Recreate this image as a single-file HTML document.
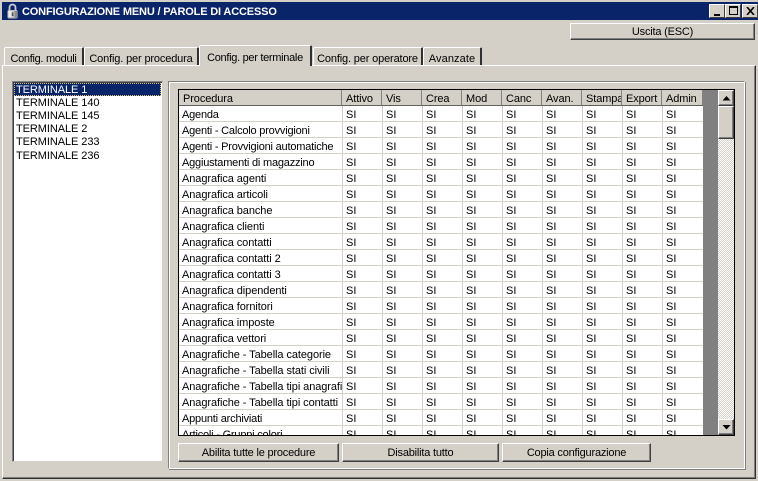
<!DOCTYPE html>
<html><head><meta charset="utf-8"><style>
html,body{margin:0;padding:0}
body{width:758px;height:481px;overflow:hidden;background:#d4d0c8;position:relative;font:11px "Liberation Sans",sans-serif;color:#000}
div{position:absolute;box-sizing:border-box;white-space:nowrap}
.btn{background:#d4d0c8;border:1px solid;border-color:#fff #404040 #404040 #fff;box-shadow:inset -1px -1px 0 #808080;text-align:center;line-height:19px;letter-spacing:-.2px}
.tab{background:#d4d0c8;border-top:1px solid #fff;border-left:1px solid #fff;border-right:2px solid #303030;text-align:center;border-top-left-radius:2px;border-top-right-radius:2px;letter-spacing:-.3px}
.r{left:0;width:524px;height:16px;border-bottom:1px solid #d4d0c8;background:#fff;line-height:19px;letter-spacing:-.2px}
.r b{position:absolute;top:0;width:40px;height:15px;border-left:1px solid #d4d0c8;font-weight:normal;padding-left:3px;letter-spacing:0}
.r b:nth-of-type(1){left:163px}.r b:nth-of-type(2){left:203px}.r b:nth-of-type(3){left:243px}.r b:nth-of-type(4){left:283px}.r b:nth-of-type(5){left:323px}.r b:nth-of-type(6){left:363px}.r b:nth-of-type(7){left:403px}.r b:nth-of-type(8){left:443px}.r b:nth-of-type(9){left:483px}
.r span{padding-left:3px}
.r span.a{letter-spacing:-.08px}
.h{top:0;height:16px;background:#d4d0c8;border-right:1px solid #808080;border-bottom:1px solid #606060;line-height:19px;padding-left:4px;overflow:hidden;letter-spacing:-.1px}
.l{left:3px;width:145px;height:13px;line-height:15px;font-size:11px;letter-spacing:-.07px}
.wb{width:16px;height:14px;top:4px;background:#d4d0c8;border:1px solid;border-color:#fff #404040 #404040 #fff}
.sb{left:718px;width:16px;background:#d4d0c8;border:1px solid;border-color:#fff #404040 #404040 #fff}
</style></head><body>

<!-- title bar -->
<div style="left:2px;top:2px;width:756px;height:18px;background:#0a246a"></div>
<svg style="position:absolute;left:7px;top:3px" width="11" height="16" viewBox="0 0 11 16"><path d="M2.5 8V4.5a3 3 0 0 1 6 0V8" fill="none" stroke="#d0d0d0" stroke-width="1.8"/><rect x="0.5" y="7" width="10" height="8.5" rx="1.5" fill="#c0c0c0"/><rect x="1.5" y="8" width="3" height="6" fill="#ececec"/><rect x="7.5" y="8" width="2.5" height="7" fill="#8c8c8c"/><rect x="4.8" y="9.5" width="1.6" height="3.5" fill="#505050"/></svg>
<div style="left:22px;top:5px;height:14px;line-height:14px;color:#fff;font-weight:bold;font-size:11px;letter-spacing:-.16px">CONFIGURAZIONE MENU / PAROLE DI ACCESSO</div>
<div class="wb" style="left:709px"><div style="left:4px;top:9px;width:6px;height:2px;background:#000"></div></div>
<div class="wb" style="left:725px"><div style="left:3px;top:1px;width:9px;height:9px;border:1px solid #000;border-top-width:2px"></div></div>
<div class="wb" style="left:742px"><svg style="position:absolute;left:3px;top:2px" width="9" height="8"><path d="M1 0L8 8M8 0L1 8" stroke="#000" stroke-width="1.6"/></svg></div>

<div class="btn" style="left:570px;top:23px;width:185px;height:17px;line-height:16px">Uscita (ESC)</div>

<!-- tab panel -->
<div style="left:2px;top:65px;width:754px;height:414px;background:#d4d0c8;border:1px solid;border-color:#fff #303030 #303030 #fff;box-shadow:inset -1px -1px 0 #808080"></div>
<div class="tab" style="left:4px;top:47px;width:80px;height:18px;line-height:23px">Config. moduli</div>
<div class="tab" style="left:84px;top:47px;width:115px;height:18px;line-height:23px;letter-spacing:-.15px">Config. per procedura</div>
<div class="tab" style="left:199px;top:45px;width:113px;height:21px;line-height:25px;z-index:2">Config. per terminale</div>
<div class="tab" style="left:313px;top:47px;width:110px;height:18px;line-height:23px;letter-spacing:-.15px">Config. per operatore</div>
<div class="tab" style="left:423px;top:47px;width:59px;height:18px;line-height:23px;letter-spacing:.1px">Avanzate</div>

<!-- list -->
<div style="left:12px;top:81px;width:151px;height:381px;background:#fff;border:1px solid;border-color:#808080 #d4d0c8 #d4d0c8 #808080;box-shadow:inset 1px 1px 0 #404040"></div>
<div style="left:14px;top:83px;width:147px;height:13px;background:#0a246a;outline:1px dotted #d8c070;outline-offset:-1px"></div>
<div class="l" style="left:16px;top:83px;color:#fff">TERMINALE 1</div>
<div class="l" style="left:16px;top:96px">TERMINALE 140</div>
<div class="l" style="left:16px;top:109px">TERMINALE 145</div>
<div class="l" style="left:16px;top:122px">TERMINALE 2</div>
<div class="l" style="left:16px;top:135px">TERMINALE 233</div>
<div class="l" style="left:16px;top:149px">TERMINALE 236</div>

<!-- group -->
<div style="left:168px;top:81px;width:577px;height:388px;border:1px solid;border-color:#808080 #fff #fff #808080;box-shadow:inset 1px 1px 0 #fff,1px 1px 0 #808080"></div>

<!-- grid -->
<div style="left:178px;top:89px;width:557px;height:347px;border:1px solid #000;background:#808080;overflow:hidden">
<div class="h" style="left:0;width:163px">Procedura</div>
<div class="h" style="left:163px;width:40px">Attivo</div>
<div class="h" style="left:203px;width:40px">Vis</div>
<div class="h" style="left:243px;width:40px">Crea</div>
<div class="h" style="left:283px;width:40px">Mod</div>
<div class="h" style="left:323px;width:40px">Canc</div>
<div class="h" style="left:363px;width:40px">Avan.</div>
<div class="h" style="left:403px;width:40px">Stampa</div>
<div class="h" style="left:443px;width:40px">Export</div>
<div class="h" style="left:483px;width:41px">Admin</div>
<div class="r" style="top:16px"><span>Agenda</span><b>SI</b><b>SI</b><b>SI</b><b>SI</b><b>SI</b><b>SI</b><b>SI</b><b>SI</b><b>SI</b></div>
<div class="r" style="top:32px"><span>Agenti - Calcolo provvigioni</span><b>SI</b><b>SI</b><b>SI</b><b>SI</b><b>SI</b><b>SI</b><b>SI</b><b>SI</b><b>SI</b></div>
<div class="r" style="top:48px"><span>Agenti - Provvigioni automatiche</span><b>SI</b><b>SI</b><b>SI</b><b>SI</b><b>SI</b><b>SI</b><b>SI</b><b>SI</b><b>SI</b></div>
<div class="r" style="top:64px"><span>Aggiustamenti di magazzino</span><b>SI</b><b>SI</b><b>SI</b><b>SI</b><b>SI</b><b>SI</b><b>SI</b><b>SI</b><b>SI</b></div>
<div class="r" style="top:80px"><span class="a">Anagrafica agenti</span><b>SI</b><b>SI</b><b>SI</b><b>SI</b><b>SI</b><b>SI</b><b>SI</b><b>SI</b><b>SI</b></div>
<div class="r" style="top:96px"><span class="a">Anagrafica articoli</span><b>SI</b><b>SI</b><b>SI</b><b>SI</b><b>SI</b><b>SI</b><b>SI</b><b>SI</b><b>SI</b></div>
<div class="r" style="top:112px"><span class="a">Anagrafica banche</span><b>SI</b><b>SI</b><b>SI</b><b>SI</b><b>SI</b><b>SI</b><b>SI</b><b>SI</b><b>SI</b></div>
<div class="r" style="top:128px"><span class="a">Anagrafica clienti</span><b>SI</b><b>SI</b><b>SI</b><b>SI</b><b>SI</b><b>SI</b><b>SI</b><b>SI</b><b>SI</b></div>
<div class="r" style="top:144px"><span class="a">Anagrafica contatti</span><b>SI</b><b>SI</b><b>SI</b><b>SI</b><b>SI</b><b>SI</b><b>SI</b><b>SI</b><b>SI</b></div>
<div class="r" style="top:160px"><span class="a">Anagrafica contatti 2</span><b>SI</b><b>SI</b><b>SI</b><b>SI</b><b>SI</b><b>SI</b><b>SI</b><b>SI</b><b>SI</b></div>
<div class="r" style="top:176px"><span class="a">Anagrafica contatti 3</span><b>SI</b><b>SI</b><b>SI</b><b>SI</b><b>SI</b><b>SI</b><b>SI</b><b>SI</b><b>SI</b></div>
<div class="r" style="top:192px"><span class="a">Anagrafica dipendenti</span><b>SI</b><b>SI</b><b>SI</b><b>SI</b><b>SI</b><b>SI</b><b>SI</b><b>SI</b><b>SI</b></div>
<div class="r" style="top:208px"><span class="a">Anagrafica fornitori</span><b>SI</b><b>SI</b><b>SI</b><b>SI</b><b>SI</b><b>SI</b><b>SI</b><b>SI</b><b>SI</b></div>
<div class="r" style="top:224px"><span class="a">Anagrafica imposte</span><b>SI</b><b>SI</b><b>SI</b><b>SI</b><b>SI</b><b>SI</b><b>SI</b><b>SI</b><b>SI</b></div>
<div class="r" style="top:240px"><span class="a">Anagrafica vettori</span><b>SI</b><b>SI</b><b>SI</b><b>SI</b><b>SI</b><b>SI</b><b>SI</b><b>SI</b><b>SI</b></div>
<div class="r" style="top:256px"><span class="a">Anagrafiche - Tabella categorie</span><b>SI</b><b>SI</b><b>SI</b><b>SI</b><b>SI</b><b>SI</b><b>SI</b><b>SI</b><b>SI</b></div>
<div class="r" style="top:272px"><span class="a">Anagrafiche - Tabella stati civili</span><b>SI</b><b>SI</b><b>SI</b><b>SI</b><b>SI</b><b>SI</b><b>SI</b><b>SI</b><b>SI</b></div>
<div class="r" style="top:288px"><span class="a">Anagrafiche - Tabella tipi anagrafi</span><b>SI</b><b>SI</b><b>SI</b><b>SI</b><b>SI</b><b>SI</b><b>SI</b><b>SI</b><b>SI</b></div>
<div class="r" style="top:304px"><span class="a">Anagrafiche - Tabella tipi contatti</span><b>SI</b><b>SI</b><b>SI</b><b>SI</b><b>SI</b><b>SI</b><b>SI</b><b>SI</b><b>SI</b></div>
<div class="r" style="top:320px"><span>Appunti archiviati</span><b>SI</b><b>SI</b><b>SI</b><b>SI</b><b>SI</b><b>SI</b><b>SI</b><b>SI</b><b>SI</b></div>
<div class="r" style="top:336px"><span>Articoli - Gruppi colori</span><b>SI</b><b>SI</b><b>SI</b><b>SI</b><b>SI</b><b>SI</b><b>SI</b><b>SI</b><b>SI</b></div>
</div>

<!-- scrollbar -->
<div style="left:718px;top:90px;width:16px;height:345px;background:repeating-conic-gradient(#d4d0c8 0 25%,#fff 0 50%) 0 0/2px 2px"></div>
<div class="sb" style="top:90px;height:16px;box-shadow:inset -1px -1px 0 #808080"><svg style="position:absolute;left:3px;top:5px" width="9" height="5"><path d="M4.5 0L8.5 4.5H.5Z" fill="#000"/></svg></div>
<div class="sb" style="top:106px;height:33px;box-shadow:inset -1px -1px 0 #808080"></div>
<div class="sb" style="top:419px;height:16px;box-shadow:inset -1px -1px 0 #808080"><svg style="position:absolute;left:3px;top:5px" width="9" height="5"><path d="M.5 0H8.5L4.5 4.5Z" fill="#000"/></svg></div>

<!-- bottom buttons -->
<div class="btn" style="left:178px;top:443px;width:161px;height:19px">Abilita tutte le procedure</div>
<div class="btn" style="left:342px;top:443px;width:157px;height:19px">Disabilita tutto</div>
<div class="btn" style="left:502px;top:443px;width:149px;height:19px">Copia configurazione</div>

</body></html>
